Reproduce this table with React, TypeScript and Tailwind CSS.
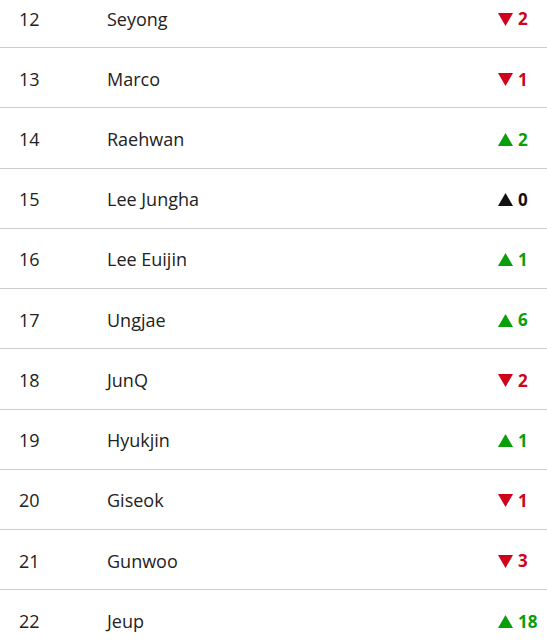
import React from 'react';

type Row = { rank: number; name: string; dir: 'up' | 'down'; delta: number };

const rows: Row[] = [
  { rank: 12, name: 'Seyong', dir: 'down', delta: 2 },
  { rank: 13, name: 'Marco', dir: 'down', delta: 1 },
  { rank: 14, name: 'Raehwan', dir: 'up', delta: 2 },
  { rank: 15, name: 'Lee Jungha', dir: 'up', delta: 0 },
  { rank: 16, name: 'Lee Euijin', dir: 'up', delta: 1 },
  { rank: 17, name: 'Ungjae', dir: 'up', delta: 6 },
  { rank: 18, name: 'JunQ', dir: 'down', delta: 2 },
  { rank: 19, name: 'Hyukjin', dir: 'up', delta: 1 },
  { rank: 20, name: 'Giseok', dir: 'down', delta: 1 },
  { rank: 21, name: 'Gunwoo', dir: 'down', delta: 3 },
  { rank: 22, name: 'Jeup', dir: 'up', delta: 18 },
];

const Change: React.FC<{ dir: 'up' | 'down'; delta: number }> = ({ dir, delta }) => {
  const color = delta === 0 ? 'text-[#111]' : dir === 'up' ? 'text-[#0a9e0a]' : 'text-[#d0021b]';
  return (
    <div className={`w-[49px] flex items-center gap-[5px] font-bold text-[17px] ${color}`}>
      <svg width="15" height="13" viewBox="0 0 15 13" className="shrink-0">
        {dir === 'up' ? (
          <polygon points="7.5,0 15,13 0,13" fill="currentColor" />
        ) : (
          <polygon points="0,0 15,0 7.5,13" fill="currentColor" />
        )}
      </svg>
      <span>{delta}</span>
    </div>
  );
};

const App: React.FC = () => {
  return (
    <div className="w-[547px] h-[644px] overflow-hidden bg-white" style={{ fontFamily: '"Open Sans", "Noto Sans", sans-serif' }}>
      <div className="-mt-[12px]">
        {rows.map(r => (
          <div key={r.rank} className="h-[60.22px] box-border flex items-center border-b border-[#cccccc] pl-[19px] pt-[3px] text-[18px] text-[#222]">
            <div className="w-[88px]">{r.rank}</div>
            <div className="flex-1">{r.name}</div>
            <Change dir={r.dir} delta={r.delta} />
          </div>
        ))}
      </div>
    </div>
  );
};

export default App;
